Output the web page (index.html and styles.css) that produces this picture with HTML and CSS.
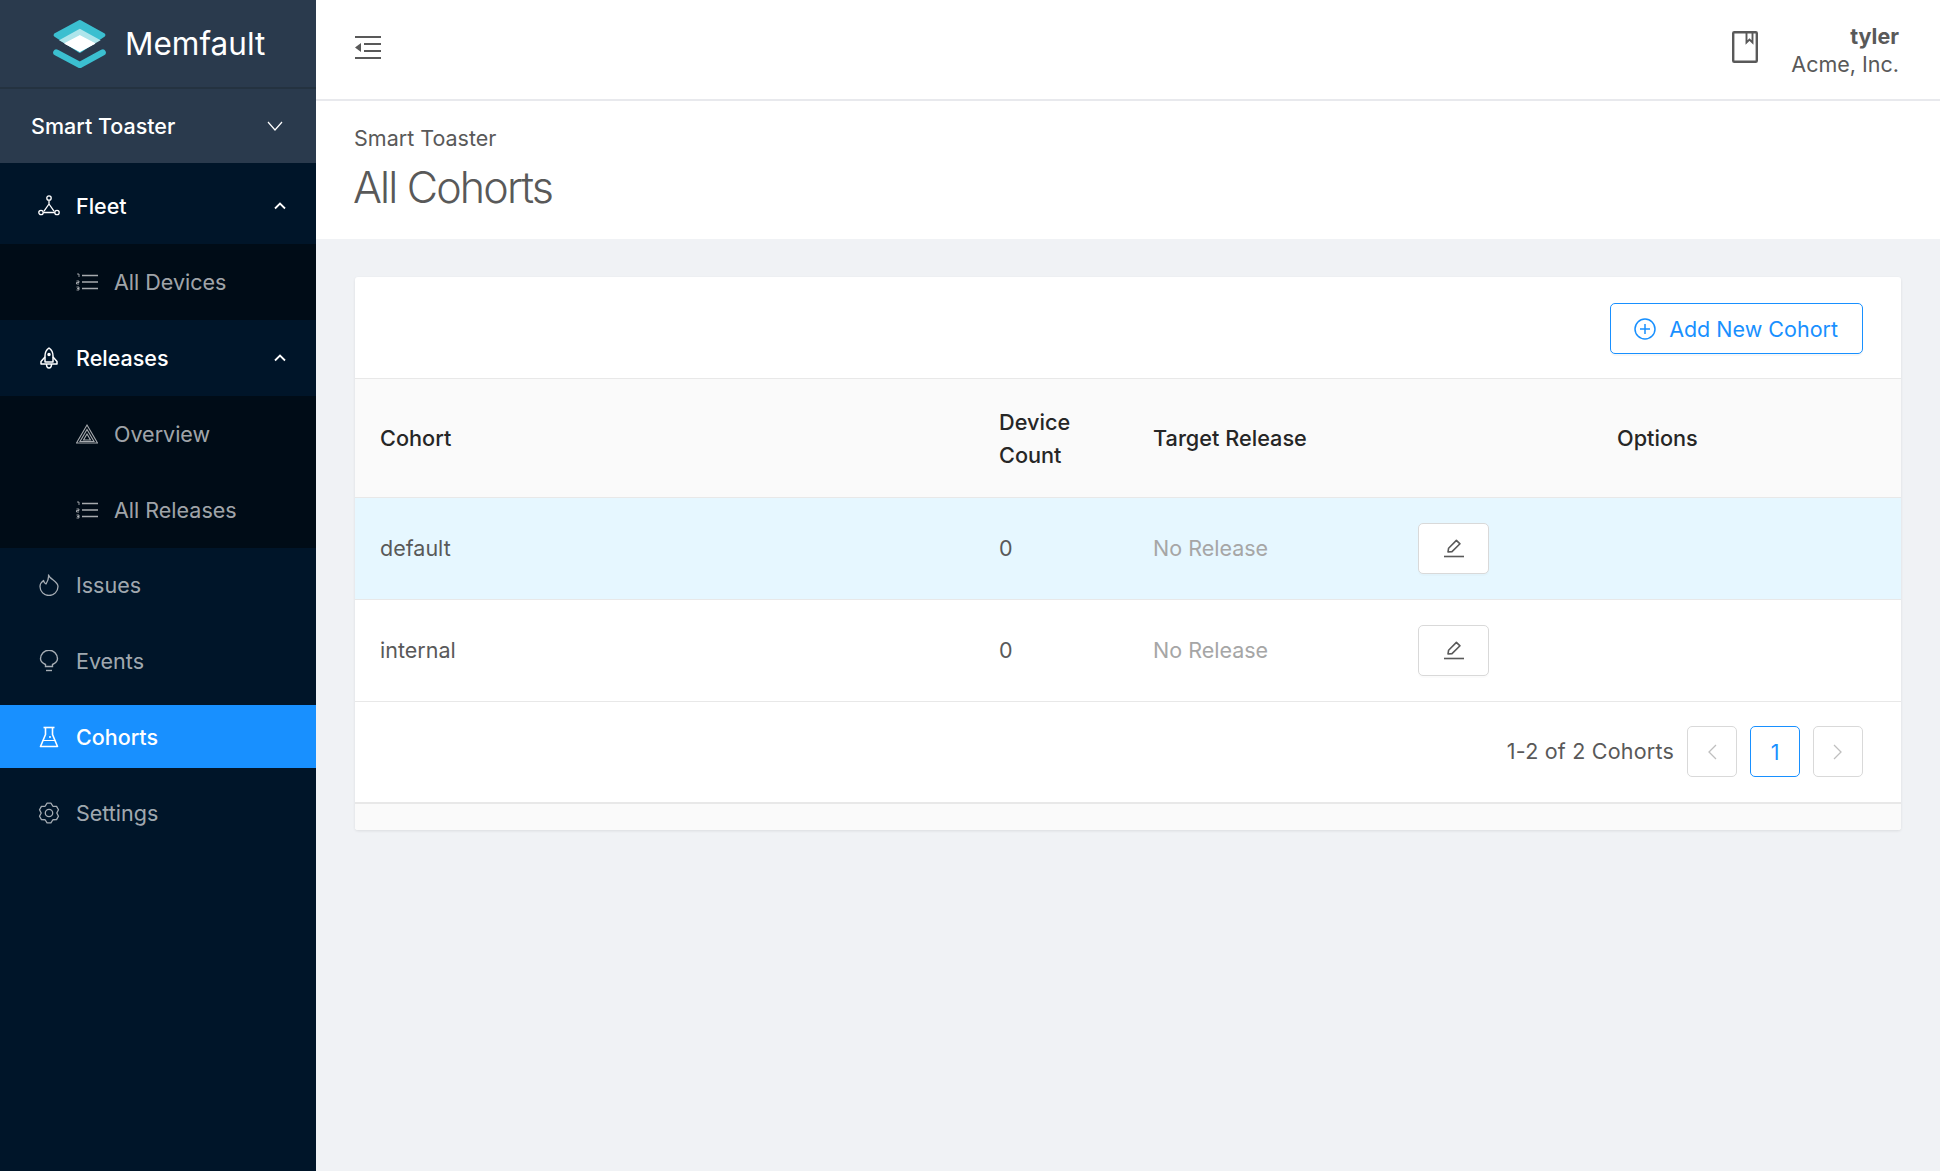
FILE: index.html
```html
<!DOCTYPE html>
<html lang="en">
<head>
    <meta charset="UTF-8">
    <title>All Cohorts</title>
    <link rel="stylesheet" href="styles.css">
</head>
<body>
    <div class="layout">
        <aside class="sidebar">
            <div class="logo">
                <svg class="logo-mark" viewBox="0 0 158 143">
                    <path d="M80 6 L150 45 L80 92 L8 45 Z" fill="#3bbfd0" stroke="#3bbfd0" stroke-width="12" stroke-linejoin="round"/>
                    <path d="M80 26 L142 60 L80 95 L18 60 Z" fill="#aee5eb"/>
                    <path d="M80 47 L124 70 L80 93 L36 70 Z" fill="#fff" stroke="#fff" stroke-width="4" stroke-linejoin="round"/>
                    <path d="M10 97 L80 134 L148 97" fill="none" stroke="#3bbfd0" stroke-width="19" stroke-linecap="round" stroke-linejoin="round"/>
                </svg>
                <span class="logo-text">Memfault</span>
            </div>
            <div class="project">
                <span>Smart Toaster</span>
                <svg class="chev-down" viewBox="0 0 16 10"><path d="M1 1 L8 9 L15 1" fill="none" stroke="currentColor" stroke-width="1.2"/></svg>
            </div>
            <nav class="menu">
                <div class="menu-group first">
                    <svg class="icon" viewBox="0 0 22 22"><g fill="none" stroke="currentColor" stroke-width="1.3"><circle cx="11" cy="3" r="2.2"/><circle cx="3" cy="17.5" r="2.2"/><circle cx="19" cy="17.5" r="2.2"/><path d="M11 5.2 V9 M11 9 L6 16.2 M11 9 L16 16.2 M5.2 17.5 H16.8"/></g></svg>
                    <span class="label">Fleet</span>
                    <svg class="chev-up" viewBox="0 0 12 8"><path d="M1 6.5 L6 1.5 L11 6.5" fill="none" stroke="currentColor" stroke-width="1.8"/></svg>
                </div>
                <div class="submenu">
                    <div class="sub-item">
                        <svg class="icon" viewBox="0 0 22 18"><use href="#list-ol"/></svg>
                        <span>All Devices</span>
                    </div>
                </div>
                <div class="menu-group">
                    <svg class="icon" viewBox="0 0 22 22"><g fill="none" stroke="currentColor" stroke-width="1.5" stroke-linejoin="round"><path d="M11 1 C14 3 15 6 15 9 V15 H7 V9 C7 6 8 3 11 1 Z"/><path d="M7 10 L3 14.5 V17 H19 V14.5 L15 10"/><path d="M8.5 17 C8.5 20 10 21 11 21 C12 21 13.5 20 13.5 17"/><circle cx="11" cy="7.5" r="1" fill="currentColor"/></g></svg>
                    <span class="label">Releases</span>
                    <svg class="chev-up" viewBox="0 0 12 8"><path d="M1 6.5 L6 1.5 L11 6.5" fill="none" stroke="currentColor" stroke-width="1.8"/></svg>
                </div>
                <div class="submenu">
                    <div class="sub-item">
                        <svg class="icon" viewBox="0 0 22 20"><g fill="none" stroke="currentColor" stroke-width="1.1"><path d="M11 1 L21.5 19 H0.5 Z"/><path d="M11 5.5 L18 17.5 H4 Z"/><path d="M11 10 L14.5 16 H7.5 Z"/></g></svg>
                        <span>Overview</span>
                    </div>
                    <div class="sub-item">
                        <svg class="icon" viewBox="0 0 22 18"><use href="#list-ol"/></svg>
                        <span>All Releases</span>
                    </div>
                </div>
                <div class="menu-item">
                    <svg class="icon" viewBox="0 0 22 22"><path d="M10.5 1 C11.5 5 20 7.5 20 12.5 A9 9 0 0 1 2 12.5 C2 10 3.5 8 5.5 6.5 C6 8.5 7 9.5 8 10 C9.5 7.5 11 4.5 10.5 1 Z" fill="none" stroke="currentColor" stroke-width="1.3" stroke-linejoin="round"/></svg>
                    <span class="label">Issues</span>
                </div>
                <div class="menu-item">
                    <svg class="icon" viewBox="0 0 22 22"><g fill="none" stroke="currentColor" stroke-width="1.4"><path d="M7.5 16.5 V14.5 C4.5 13 2.5 11 2.5 8.7 A8.5 8.5 0 0 1 19.5 8.7 C19.5 11 17.5 13 14.5 14.5 V16.5 Z"/><path d="M8 20.5 H14"/></g></svg>
                    <span class="label">Events</span>
                </div>
                <div class="menu-item active">
                    <svg class="icon" viewBox="0 0 22 22"><g fill="none" stroke="currentColor" stroke-width="1.6" stroke-linejoin="round"><path d="M5.5 1.5 H16.5"/><path d="M7.5 1.5 V8.5 L2.5 20.5 H19.5 L14.5 8.5 V1.5"/><path d="M5 14.5 H17" stroke-width="1"/></g><circle cx="12" cy="11" r="1" fill="currentColor"/></svg>
                    <span class="label">Cohorts</span>
                </div>
                <div class="menu-item">
                    <svg class="icon" viewBox="0 0 22 22"><g fill="none" stroke="currentColor" stroke-width="1.3" stroke-linejoin="round"><path d="M9.09 1.18 H12.91 L14.9 4.25 L18.55 4.44 L20.46 7.74 L18.8 11 L20.46 14.26 L18.55 17.56 L14.9 17.75 L12.91 20.82 H9.09 L7.1 17.75 L3.45 17.56 L1.54 14.26 L3.2 11 L1.54 7.74 L3.45 4.44 L7.1 4.25 Z"/><circle cx="11" cy="11" r="3.7"/></g></svg>
                    <span class="label">Settings</span>
                </div>
            </nav>
        </aside>

        <div class="main">
            <header class="topbar">
                <svg class="fold-icon" viewBox="0 0 26 23"><path d="M0 1 H26 M9 8 H26 M9 15 H26 M0 22 H26" stroke="#595959" stroke-width="2.2"/><path d="M0 11.5 L6 7 V16 Z" fill="#595959"/></svg>
                <div class="topbar-right">
                    <svg class="docs-icon" viewBox="0 0 26 32"><g fill="none" stroke="#595959"><rect x="1.2" y="1.2" width="23.6" height="29.6" stroke-width="2.4" rx="1"/><path d="M14.5 1.5 V11.5 L17.5 8.5 L20.5 11.5 V1.5" stroke-width="1.9"/></g></svg>
                    <div class="user">
                        <div class="user-name">tyler</div>
                        <div>Acme, Inc.</div>
                    </div>
                </div>
            </header>

            <div class="page-head">
                <div class="crumb">Smart Toaster</div>
                <h1>All Cohorts</h1>
            </div>

            <div class="content">
                <section class="card">
                    <div class="card-top">
                        <button class="btn-add">
                            <svg viewBox="0 0 22 22"><g fill="none" stroke="currentColor" stroke-width="1.5"><circle cx="11" cy="11" r="10"/><path d="M11 6 V16 M6 11 H16"/></g></svg>
                            Add New Cohort
                        </button>
                    </div>
                    <table class="cohorts">
                        <colgroup>
                            <col class="c-name"><col class="c-count"><col class="c-target"><col class="c-edit"><col>
                        </colgroup>
                        <thead>
                            <tr>
                                <th>Cohort</th>
                                <th>Device<br>Count</th>
                                <th colspan="2">Target Release</th>
                                <th>Options</th>
                            </tr>
                        </thead>
                        <tbody>
                            <tr class="selected">
                                <td>default</td>
                                <td>0</td>
                                <td class="muted">No Release</td>
                                <td><button class="btn-edit"><svg viewBox="0 0 20 20"><use href="#pencil"/></svg></button></td>
                                <td></td>
                            </tr>
                            <tr>
                                <td>internal</td>
                                <td>0</td>
                                <td class="muted">No Release</td>
                                <td><button class="btn-edit"><svg viewBox="0 0 20 20"><use href="#pencil"/></svg></button></td>
                                <td></td>
                            </tr>
                        </tbody>
                    </table>
                    <div class="pager">
                        <span class="pager-total">1-2 of 2 Cohorts</span>
                        <span class="page-btn off"><svg viewBox="0 0 10 16"><path d="M9 1 L2 8 L9 15" fill="none" stroke="currentColor" stroke-width="1.3"/></svg></span>
                        <span class="page-btn current">1</span>
                        <span class="page-btn off"><svg viewBox="0 0 10 16"><path d="M1 1 L8 8 L1 15" fill="none" stroke="currentColor" stroke-width="1.3"/></svg></span>
                    </div>
                    <div class="card-foot"></div>
                </section>
            </div>
        </div>
    </div>

    <!-- shared icons -->
    <svg class="defs" width="0" height="0">
        <defs>
            <g id="list-ol">
                <path d="M6 2.5 H22 M6 9 H22 M6 15.5 H22" stroke="currentColor" stroke-width="1.4"/>
                <path d="M1 1 H3 V4 M0.5 8 H3 V9.5 H0.5 V11 H3 M0.5 14 H3 V17 H0.5 M1 15.5 H3" fill="none" stroke="currentColor" stroke-width="0.9"/>
            </g>
            <g id="pencil">
                <path d="M4 14 L4.6 10.2 L12.4 2.4 L16 5.8 L8 13.6 Z" fill="none" stroke="#595959" stroke-width="1.6" stroke-linejoin="round"/>
                <path d="M0 18.5 H20" stroke="#595959" stroke-width="1.6"/>
            </g>
        </defs>
    </svg>
</body>
</html>
```

FILE: styles.css
```css
* {
    box-sizing: border-box;
}
body {
    margin: 0;
    font-family: 'Inter', 'Liberation Sans', sans-serif;
    font-size: 21.5px;
    color: #595959;
    background: #f0f2f5;
    overflow: hidden;
}
.defs {
    position: absolute;
}
.layout {
    display: flex;
    height: 1171px;
}

/* Sidebar */
.sidebar {
    width: 316px;
    flex: none;
    background: #001529;
}
.logo {
    height: 89px;
    display: flex;
    align-items: center;
    padding-left: 53px;
    gap: 19px;
    background: #2a3a4d;
    border-bottom: 2px solid #243240;
}
.logo-mark {
    width: 53px;
    height: 48px;
}
.logo-text {
    color: #fff;
    font-size: 31.5px;
}
.project {
    height: 74px;
    display: flex;
    align-items: center;
    justify-content: space-between;
    padding: 0 33px 0 31px;
    background: #2a3a4d;
    color: #fff;
    font-weight: 500;
}
.chev-down {
    width: 16px;
    height: 10px;
}
.menu-group, .menu-item {
    display: flex;
    align-items: center;
    padding-left: 38px;
}
.menu-group {
    height: 76px;
    color: #fff;
    font-weight: 500;
}
.menu-group.first {
    height: 81px;
    padding-top: 5px;
}
.menu-item {
    height: 63px;
    margin: 5px 0 13px;
    color: rgba(255, 255, 255, 0.65);
}
.label {
    flex: 1;
}
.icon {
    width: 22px;
    height: 22px;
    margin-right: 16px;
    flex: none;
}
.chev-up {
    width: 12px;
    height: 8px;
    margin-right: 30px;
}
.submenu {
    background: #000c17;
}
.sub-item {
    display: flex;
    align-items: center;
    height: 76px;
    padding-left: 76px;
    color: rgba(255, 255, 255, 0.65);
}
.menu-item.active {
    background: #1890ff;
    color: #fff;
    font-weight: 500;
}

/* Main column */
.main {
    flex: 1;
    display: flex;
    flex-direction: column;
}
.topbar {
    height: 101px;
    display: flex;
    align-items: center;
    justify-content: space-between;
    padding: 0 41px 0 39px;
    background: #fff;
    border-bottom: 2px solid #e8e9ed;
}
.fold-icon {
    width: 26px;
    height: 23px;
    margin-bottom: 4px;
}
.topbar-right {
    display: flex;
    align-items: center;
    gap: 33px;
}
.docs-icon {
    width: 26px;
    height: 32px;
    margin-bottom: 6px;
}
.user {
    text-align: right;
    line-height: 28px;
}
.user-name {
    font-weight: 700;
}
.page-head {
    height: 138px;
    padding: 21px 38px 0;
    background: #fff;
}
.crumb {
    line-height: 33px;
}
h1 {
    margin: 4px 0 0 -1px;
    font-size: 43px;
    line-height: 56px;
    font-weight: 300;
    letter-spacing: -1.85px;
}
.content {
    flex: 1;
    padding: 38px 39px 0;
}

/* Card */
.card {
    background: #fff;
    border-radius: 3px;
    box-shadow: 0 1px 3px rgba(0, 0, 0, 0.09);
}
.card-top {
    height: 102px;
    display: flex;
    align-items: center;
    justify-content: flex-end;
    padding: 2px 38px 0 0;
    border-bottom: 1px solid #e8e8e8;
}
.btn-add {
    display: flex;
    align-items: center;
    gap: 13px;
    height: 51px;
    padding: 0 24px 0 23px;
    font: inherit;
    color: #1890ff;
    background: #fff;
    border: 1px solid #1890ff;
    border-radius: 5px;
    box-shadow: 0 2px 0 rgba(0, 0, 0, 0.03);
}
.btn-add svg {
    width: 22px;
    height: 22px;
}
.cohorts {
    width: 100%;
    border-collapse: collapse;
    table-layout: fixed;
}
.c-name { width: 619px; }
.c-count { width: 154px; }
.c-target { width: 265px; }
.c-edit { width: 199px; }
.cohorts th, .cohorts td {
    padding: 0 0 0 25px;
    text-align: left;
    border-bottom: 1px solid #e8e8e8;
}
.cohorts th {
    height: 118px;
    padding-top: 2px;
    background: #fafafa;
    color: #262626;
    font-size: 21.7px;
    font-weight: 500;
    line-height: 33px;
}
.cohorts td {
    height: 102px;
}
.selected td {
    background: #e6f7ff;
}
.muted {
    color: #a6a6a6;
}
.btn-edit {
    display: flex;
    align-items: center;
    justify-content: center;
    width: 71px;
    height: 51px;
    background: #fff;
    border: 1px solid #d9d9d9;
    border-radius: 5px;
    box-shadow: 0 2px 0 rgba(0, 0, 0, 0.015);
}
.btn-edit svg {
    width: 20px;
    height: 20px;
}
.pager {
    height: 102px;
    display: flex;
    align-items: center;
    justify-content: flex-end;
    gap: 13px;
    padding-right: 38px;
    border-bottom: 2px solid #e8e8e8;
}
.pager-total {
    letter-spacing: 0.2px;
    margin-bottom: 2px;
}
.page-btn {
    display: flex;
    align-items: center;
    justify-content: center;
    width: 50px;
    height: 51px;
    border: 1px solid #d9d9d9;
    border-radius: 5px;
}
.page-btn svg {
    width: 10px;
    height: 16px;
}
.page-btn.off {
    color: #bfbfbf;
}
.page-btn.current {
    color: #1890ff;
    border-color: #1890ff;
}
.card-foot {
    height: 26px;
    background: #fafafa;
    border-radius: 0 0 3px 3px;
}
```
